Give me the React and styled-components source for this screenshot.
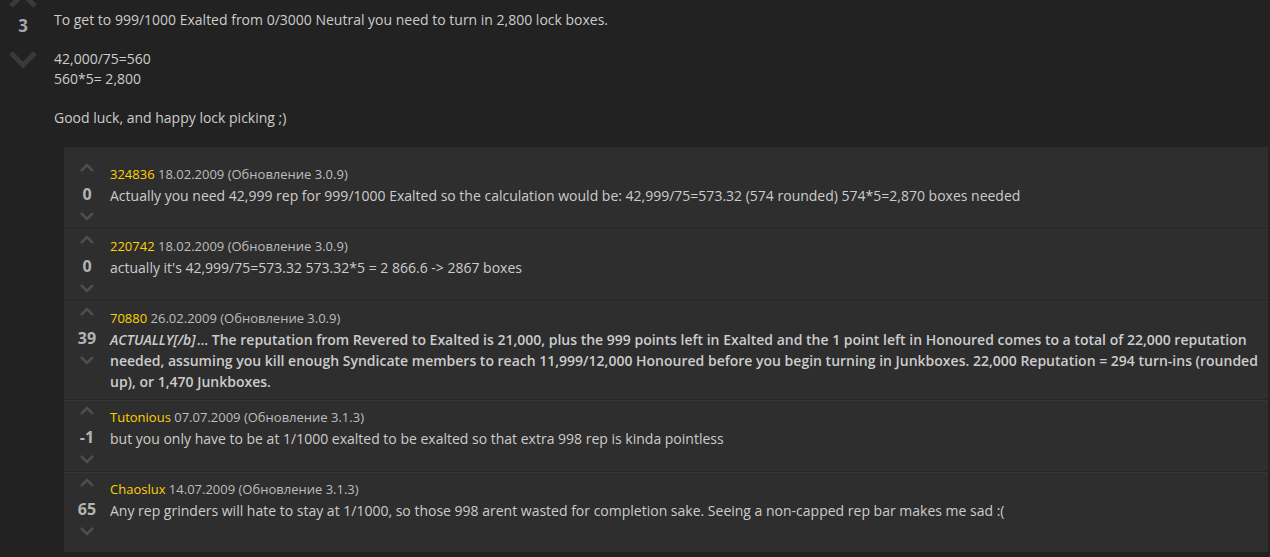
import React from 'react';
import styled, { createGlobalStyle } from 'styled-components';

const GlobalStyle = createGlobalStyle`
  html, body {
    margin: 0;
    padding: 0;
    background: #222222;
    overflow: hidden;
  }
  body {
    font-family: "Open Sans", "Noto Sans", sans-serif;
    color: #cccccc;
  }
`;

const Post = styled.div`
  display: flex;
  align-items: flex-start;
  padding-right: 2px;
`;

const PostVotes = styled.div`
  flex: 0 0 46px;
  display: flex;
  flex-direction: column;
  align-items: center;
  margin-top: -9px;
`;

const PostScore = styled.div`
  font-size: 17px;
  font-weight: 700;
  line-height: 20px;
  color: #a4a6ad;
  margin: 7px 0 14px;
`;

const PostContent = styled.div`
  flex: 1;
  padding-left: 8px;
  padding-top: 10px;
  min-width: 0;
`;

const PostText = styled.div`
  font-size: 14px;
  line-height: 19.5px;
  color: #cccccc;
`;

const CommentsPanel = styled.div`
  margin: 20px 0 0 10px;
  background: #2e2e2e;
  padding: 10px 0 9px;
`;

const Comment = styled.div`
  display: flex;
  align-items: flex-start;
  padding: 7px 8px 7px 0;
  & + & {
    border-top: 1px solid #252525;
    box-shadow: inset 0 1px 0 #363636;
  }
`;

const VoteColumn = styled.div`
  flex: 0 0 46px;
  display: flex;
  flex-direction: column;
  align-items: center;
  margin-top: -1px;
`;

const Score = styled.div`
  font-size: 16px;
  font-weight: 700;
  line-height: 20px;
  color: #b4b4b4;
  margin: 11px 0 7px;
`;

const CommentBody = styled.div`
  flex: 1;
  min-width: 0;
`;

const Meta = styled.div`
  font-size: 13px;
  line-height: 21px;
  color: #bdbdbd;
`;

const Author = styled.span`
  color: #ffd100;
`;

const Text = styled.div`
  font-size: 14px;
  line-height: 21px;
  color: #cccccc;
  font-weight: ${p => (p.$bold ? 600 : 400)};
`;

const Em = styled.i`
  padding-right: 1px;
`;

const Chevron = ({ up, w, h, stroke, color, sw }) => (
  <svg width={w} height={h} viewBox={`0 0 ${w} ${h}`} style={{ display: 'block' }}>
    <polyline
      points={
        up
          ? `${sw},${h - sw} ${w / 2},${sw} ${w - sw},${h - sw}`
          : `${sw},${sw} ${w / 2},${h - sw} ${w - sw},${sw}`
      }
      fill="none"
      stroke={color}
      strokeWidth={stroke}
      strokeLinecap="butt"
      strokeLinejoin="miter"
    />
  </svg>
);

const comments = [
  {
    user: '324836',
    date: '18.02.2009 (Обновление 3.0.9)',
    score: '0',
    text: 'Actually you need 42,999 rep for 999/1000 Exalted so the calculation would be: 42,999/75=573.32 (574 rounded) 574*5=2,870 boxes needed',
  },
  {
    user: '220742',
    date: '18.02.2009 (Обновление 3.0.9)',
    score: '0',
    text: "actually it's 42,999/75=573.32 573.32*5 = 2 866.6 -> 2867 boxes",
  },
  {
    user: '70880',
    date: '26.02.2009 (Обновление 3.0.9)',
    score: '39',
    bold: true,
    text: (
      <>
        <Em>ACTUALLY[/b]</Em>... The reputation from Revered to Exalted is 21,000, plus the 999 points left in Exalted and the 1 point left in Honoured comes to a total of 22,000 reputation needed, assuming you kill enough Syndicate members to reach 11,999/12,000 Honoured before you begin turning in Junkboxes. 22,000 Reputation = 294 turn-ins (rounded up), or 1,470 Junkboxes.
      </>
    ),
  },
  {
    user: 'Tutonious',
    date: '07.07.2009 (Обновление 3.1.3)',
    score: '-1',
    text: 'but you only have to be at 1/1000 exalted to be exalted so that extra 998 rep is kinda pointless',
  },
  {
    user: 'Chaoslux',
    date: '14.07.2009 (Обновление 3.1.3)',
    score: '65',
    text: 'Any rep grinders will hate to stay at 1/1000, so those 998 arent wasted for completion sake. Seeing a non-capped rep bar makes me sad :(',
  },
];

export default function App() {
  return (
    <>
      <GlobalStyle />
      <Post>
        <PostVotes>
          <Chevron up w={30} h={18} stroke={5} sw={3} color="#3a3a3a" />
          <PostScore>3</PostScore>
          <Chevron w={30} h={18} stroke={5} sw={3} color="#3a3a3a" />
        </PostVotes>
        <PostContent>
          <PostText>
            To get to 999/1000 Exalted from 0/3000 Neutral you need to turn in 2,800 lock boxes.
            <br />
            <br />
            42,000/75=560
            <br />
            560*5= 2,800
            <br />
            <br />
            Good luck, and happy lock picking ;)
          </PostText>
          <CommentsPanel>
            {comments.map((c, i) => (
              <Comment key={i}>
                <VoteColumn>
                  <Chevron up w={16} h={10} stroke={2.5} sw={2} color="#4e4e4e" />
                  <Score>{c.score}</Score>
                  <Chevron w={16} h={10} stroke={2.5} sw={2} color="#4e4e4e" />
                </VoteColumn>
                <CommentBody>
                  <Meta>
                    <Author>{c.user}</Author> {c.date}
                  </Meta>
                  <Text $bold={c.bold}>{c.text}</Text>
                </CommentBody>
              </Comment>
            ))}
          </CommentsPanel>
        </PostContent>
      </Post>
    </>
  );
}
